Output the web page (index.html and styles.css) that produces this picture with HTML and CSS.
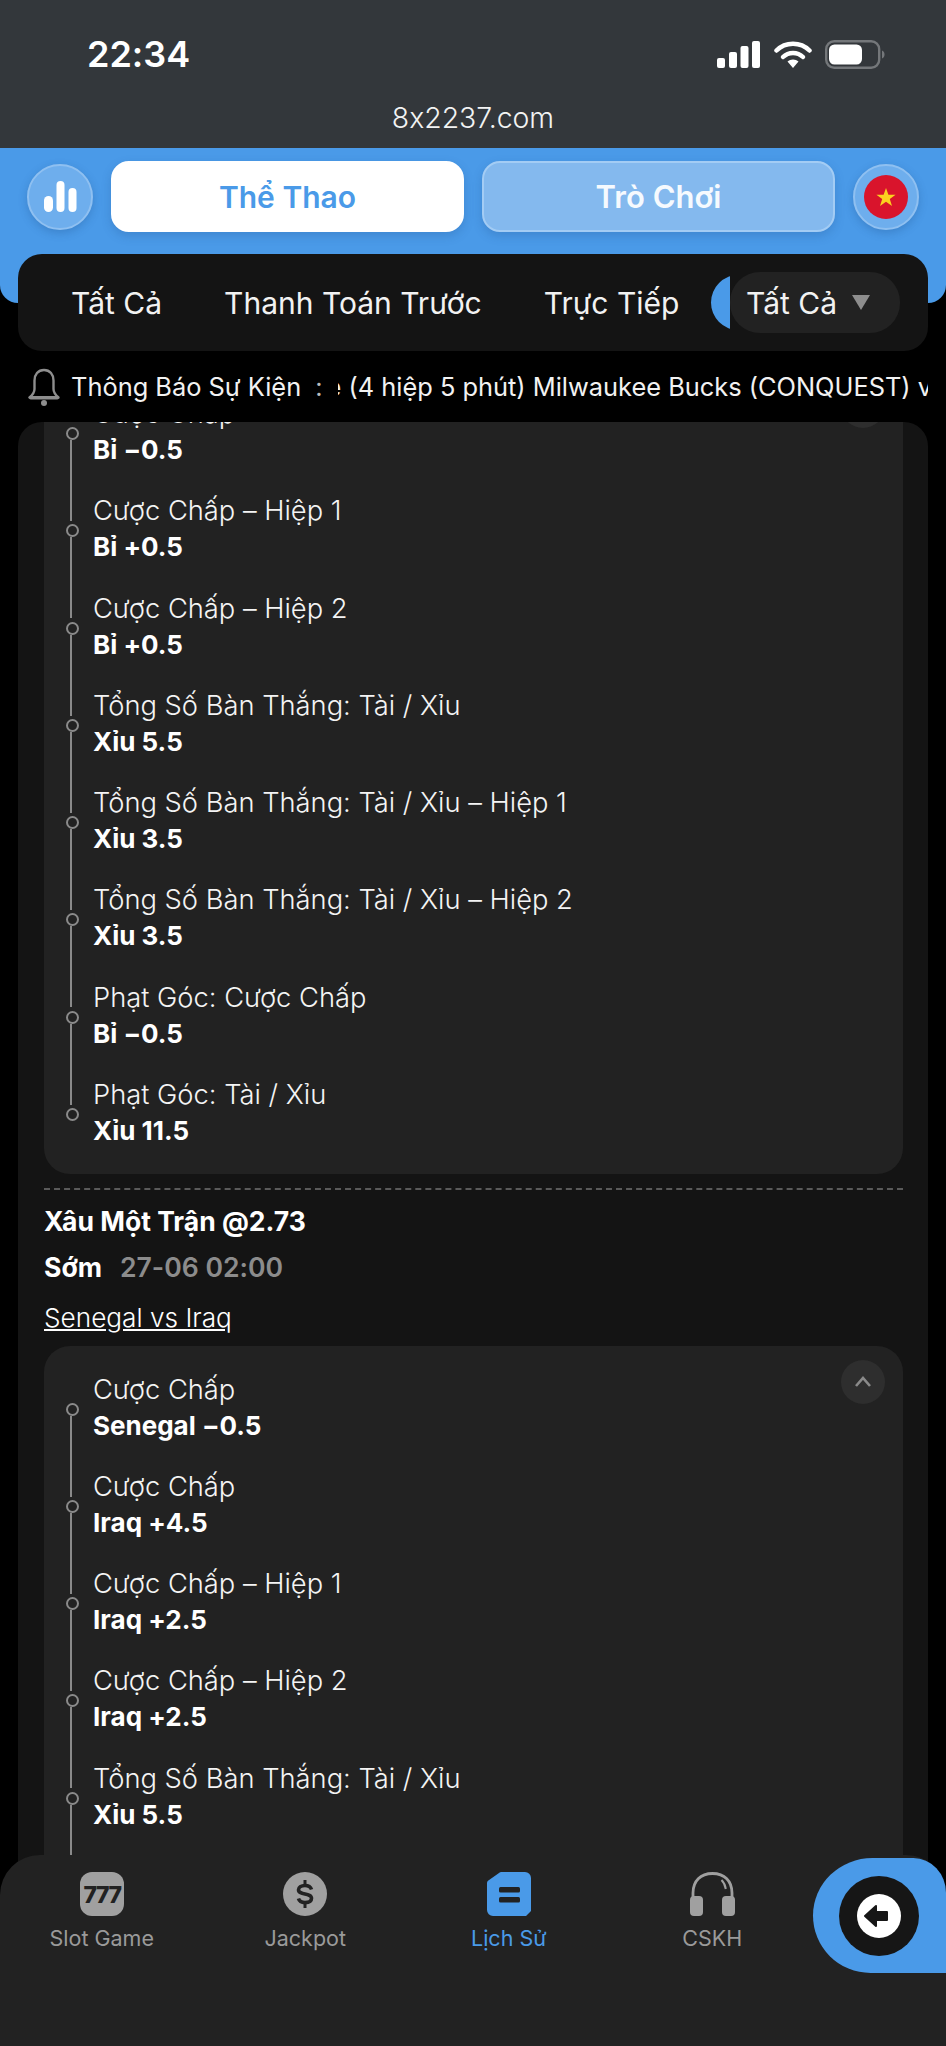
FILE: index.html
```html
<!DOCTYPE html>
<html lang="vi">
<head>
    <meta charset="UTF-8">
    <meta name="viewport" content="width=device-width, initial-scale=1.0">
    <title>8x2237.com</title>
    <link rel="stylesheet" href="styles.css">
</head>
<body>
    <div class="browser-bar">
        <div class="status-row">
            <span class="clock">22:34</span>
            <div class="status-icons">
                <svg width="43" height="27" viewBox="0 0 43 27"><rect x="0" y="17" width="8" height="10" rx="2" fill="#fff"/><rect x="12" y="11" width="8" height="16" rx="2" fill="#fff"/><rect x="23.500" y="5" width="8" height="22" rx="2" fill="#fff"/><rect x="35" y="0" width="8" height="27" rx="2" fill="#fff"/></svg>
                <svg width="38" height="28" viewBox="0 0 38 28"><path d="M2.5 10.5C11.5 1.5 26.5 1.500 35.500 10.500" fill="none" stroke="#fff" stroke-width="4.500" stroke-linecap="round"/><path d="M9 17C14.500 11.500 23.500 11.500 29 17" fill="none" stroke="#fff" stroke-width="4.500" stroke-linecap="round"/><path d="M13.500 21.500C16.500 18.800 21.500 18.800 24.500 21.500L19 28Z" fill="#fff"/></svg>
                <svg width="60" height="29" viewBox="0 0 60 29"><rect x="1.200" y="1.200" width="53" height="26.600" rx="8" fill="none" stroke="#74777a" stroke-width="2.400"/><rect x="4" y="4.500" width="33" height="20" rx="5.500" fill="#fff"/><path d="M57 10.500c2 .8 2.500 2.300 2.500 4s-.5 3.200-2.500 4z" fill="#74777a"/></svg>
            </div>
        </div>
        <div class="url">8x2237.com</div>
    </div>

    <header class="top-header">
        <div class="round-btn">
            <svg width="33" height="31" viewBox="0 0 33 31"><rect x="0" y="15" width="9" height="16" rx="4.500" fill="#fff"/><rect x="12.500" y="0" width="8" height="31" rx="4" fill="#fff"/><rect x="24.500" y="7" width="8" height="24" rx="4" fill="#fff"/></svg>
        </div>
        <div class="mode-btn mode-active">Thể Thao</div>
        <div class="mode-btn">Trò Chơi</div>
        <div class="round-btn">
            <svg width="44" height="44" viewBox="0 0 44 44"><circle cx="22" cy="22" r="22" fill="#d9142c"/><path d="M22 13l2.400 6.800h7.200l-5.800 4.300 2.200 7L22 26.800l-6 4.300 2.200-7-5.800-4.300h7.200z" fill="#fbd11f"/></svg>
        </div>
    </header>

    <nav class="tab-bar">
        <div class="tabs">
            <span class="tab">Tất Cả</span>
            <span class="tab">Thanh Toán Trước</span>
            <span class="tab">Trực Tiếp</span>
            <span class="tab-pill"></span>
        </div>
        <div class="filter">Tất Cả<span class="filter-arrow"></span></div>
    </nav>

    <div class="notice">
        <svg class="bell" width="32" height="38" viewBox="0 0 32 38"><path d="M16 2c-6 0-9.500 4.500-9.500 10.500V21c0 4-2 6-5 8.500h29c-3-2.500-5-4.500-5-8.500v-8.500C25.500 6.500 22 2 16 2z" fill="none" stroke="#8e8e8e" stroke-width="2.400" stroke-linejoin="round"/><rect x="1" y="28" width="30" height="3.500" rx="1.700" fill="#8e8e8e"/><circle cx="16" cy="35" r="3" fill="#8e8e8e"/></svg>
        <span class="notice-title">Thông Báo Sự Kiện</span>
        <span class="notice-colon">:</span>
        <div class="ticker"><span class="ticker-text">e (4 hiệp 5 phút) Milwaukee Bucks (CONQUEST) vs Dallas Mavericks</span></div>
    </div>

    <main class="history">
        <div class="history-scroll">
            <section class="legs">
                <span class="collapse"><svg width="18" height="12" viewBox="0 0 18 12"><path d="M2 10l7-8 7 8" fill="none" stroke="#8a8a8a" stroke-width="2.600"/></svg></span>
                <div class="leg"><div>Cược Chấp</div><b>Bỉ −0.5</b></div>
                <div class="leg"><div>Cược Chấp – Hiệp 1</div><b>Bỉ +0.5</b></div>
                <div class="leg"><div>Cược Chấp – Hiệp 2</div><b>Bỉ +0.5</b></div>
                <div class="leg"><div>Tổng Số Bàn Thắng: Tài / Xỉu</div><b>Xỉu 5.5</b></div>
                <div class="leg"><div>Tổng Số Bàn Thắng: Tài / Xỉu – Hiệp 1</div><b>Xỉu 3.5</b></div>
                <div class="leg"><div>Tổng Số Bàn Thắng: Tài / Xỉu – Hiệp 2</div><b>Xỉu 3.5</b></div>
                <div class="leg"><div>Phạt Góc: Cược Chấp</div><b>Bỉ −0.5</b></div>
                <div class="leg leg-last"><div>Phạt Góc: Tài / Xỉu</div><b>Xỉu 11.5</b></div>
            </section>

            <div class="divider"></div>
            <div class="bet-title">Xâu Một Trận @2.73</div>
            <div class="bet-meta"><b>Sớm</b><span>27-06 02:00</span></div>
            <a class="bet-match">Senegal vs Iraq</a>

            <section class="legs legs-open">
                <span class="collapse"><svg width="18" height="12" viewBox="0 0 18 12"><path d="M2 10l7-8 7 8" fill="none" stroke="#8a8a8a" stroke-width="2.600"/></svg></span>
                <div class="leg"><div>Cược Chấp</div><b>Senegal −0.5</b></div>
                <div class="leg"><div>Cược Chấp</div><b>Iraq +4.5</b></div>
                <div class="leg"><div>Cược Chấp – Hiệp 1</div><b>Iraq +2.5</b></div>
                <div class="leg"><div>Cược Chấp – Hiệp 2</div><b>Iraq +2.5</b></div>
                <div class="leg"><div>Tổng Số Bàn Thắng: Tài / Xỉu</div><b>Xỉu 5.5</b></div>
            </section>
        </div>
    </main>

    <footer class="bottom-nav">
        <div class="nav-item">
            <svg width="44" height="44" viewBox="0 0 44 44"><rect width="44" height="44" rx="12" fill="#a0a0a0"/><text x="22" y="31" text-anchor="middle" class="icon-777">777</text></svg>
            <span>Slot Game</span>
        </div>
        <div class="nav-item">
            <svg width="44" height="44" viewBox="0 0 44 44"><circle cx="22" cy="22" r="22" fill="#a0a0a0"/><path d="M28.500 17.500c-.8-2.500-3-4-6.500-4-4 0-6.500 1.800-6.500 4.300 0 5.700 13 2.700 13 8.500 0 2.700-2.500 4.300-6.500 4.300-3.500 0-5.800-1.500-6.500-4.100" fill="none" stroke="#222" stroke-width="3.600"/><rect x="20.500" y="8" width="3" height="5" fill="#222"/><rect x="20.500" y="31" width="3" height="5" fill="#222"/></svg>
            <span>Jackpot</span>
        </div>
        <div class="nav-item nav-active">
            <svg width="44" height="44" viewBox="0 0 44 44"><path d="M15 0h23a6 6 0 0 1 6 6v33l-5 5H6a6 6 0 0 1-6-6V11a3 3 0 0 1 1-2.200L12 1a4 4 0 0 1 3-1z" fill="#4a9ae8"/><rect x="12" y="15" width="21" height="5.500" rx="1.500" fill="#222"/><rect x="12" y="25" width="21" height="5.500" rx="1.500" fill="#222"/></svg>
            <span>Lịch Sử</span>
        </div>
        <div class="nav-item">
            <svg width="45" height="44" viewBox="0 0 45 44"><path d="M3 26V21C3 9 10.500 1.500 22.500 1.500S42 9 42 21v5" fill="none" stroke="#a0a0a0" stroke-width="2.800"/><path d="M31.500 8c2.500 2.500 3.800 5.500 4.300 9" fill="none" stroke="#a0a0a0" stroke-width="2"/><rect x="0" y="24" width="13" height="20" rx="4" fill="#a0a0a0"/><rect x="32" y="24" width="13" height="20" rx="4" fill="#a0a0a0"/></svg>
            <span>CSKH</span>
        </div>
    </footer>

    <div class="back-btn">
        <div class="back-ring">
            <svg width="44" height="44" viewBox="0 0 44 44"><circle cx="22" cy="22" r="22" fill="#fff"/><path d="M8 22L19 12v6h11v8H19v6z" fill="#161616" stroke="#161616" stroke-width="2" stroke-linejoin="round"/></svg>
        </div>
    </div>
</body>
</html>
```

FILE: styles.css
```css
* {
    box-sizing: border-box;
}
html, body {
    margin: 0;
    height: 2046px;
    overflow: hidden;
}
body {
    position: relative;
    display: flex;
    flex-direction: column;
    background-color: #000;
    color: #fff;
    font-family: Inter, "Liberation Sans", sans-serif;
    font-feature-settings: "calt" 0;
}

/* browser chrome */
.browser-bar {
    height: 148px;
    background-color: #33373b;
    flex: none;
}
.status-row {
    display: flex;
    justify-content: space-between;
    align-items: center;
    height: 108px;
    padding: 0 61px 0 87px;
}
.clock {
    font-size: 36px;
    font-weight: 600;
}
.status-icons {
    display: flex;
    align-items: center;
    gap: 13.500px;
}
.url {
    text-align: center;
    font-size: 28.400px;
    font-weight: 300;
    line-height: 20px;
    color: #f2f3f3;
}

/* blue header */
.top-header {
    display: flex;
    align-items: center;
    gap: 18px;
    height: 155px;
    padding: 13px 27px 71px 27px;
    background-color: #4a9ae8;
    border-radius: 0 0 18px 18px;
    flex: none;
}
.round-btn {
    display: flex;
    align-items: center;
    justify-content: center;
    width: 66px;
    height: 66px;
    border-radius: 50%;
    background-color: #6eaeed;
    border: 2px solid #8fc0f1;
    box-shadow: 0 3px 8px rgba(30, 80, 140, 0.3);
    flex: none;
}
.mode-btn {
    flex: 1;
    height: 71px;
    display: flex;
    align-items: center;
    justify-content: center;
    font-size: 31px;
    font-weight: 600;
    border-radius: 18px;
    background-color: #84b9ee;
    border: 2px solid #a3ccf4;
    color: #f6fafe;
    box-shadow: 0 4px 10px rgba(30, 80, 140, 0.25);
}
.mode-active {
    font-size: 30px;
    background-color: #fff;
    border-color: #fff;
    color: #4a9ae8;
}

/* tabs */
.tab-bar {
    display: flex;
    align-items: center;
    height: 97px;
    margin: -49px 18px 0;
    padding: 0 28px 0 53px;
    border-radius: 24px;
    background-color: #141414;
    flex: none;
    z-index: 1;
}
.tabs {
    display: flex;
    align-items: center;
    flex: 1;
    gap: 62px;
    overflow: hidden;
    min-width: 0;
}
.tab {
    font-size: 30px;
    white-space: nowrap;
    color: #f2f2f2;
}
.tab-pill {
    width: 120px;
    height: 55px;
    margin-left: -30px;
    border-radius: 28px;
    background-color: #4a9ae8;
    flex: none;
}
.filter {
    display: flex;
    align-items: center;
    justify-content: space-between;
    width: 170px;
    height: 61px;
    padding: 0 30px 0 16px;
    border-radius: 30px;
    background-color: #222;
    font-size: 30px;
    color: #f2f2f2;
    flex: none;
}
.filter-arrow {
    width: 0;
    height: 0;
    border-left: 9px solid transparent;
    border-right: 9px solid transparent;
    border-top: 15px solid #8d8d8d;
}

/* notice */
.notice {
    display: flex;
    align-items: center;
    height: 71px;
    padding-left: 28px;
    font-size: 25.400px;
    flex: none;
    color: #f2f2f2;
}
.bell {
    flex: none;
    margin-right: 11px;
}
.notice-title {
    white-space: nowrap;
}
.notice-colon {
    margin-left: 14px;
    color: #bbb;
}
.ticker {
    width: 590px;
    margin-left: 16px;
    overflow: hidden;
    white-space: nowrap;
}
.ticker-text {
    display: inline-block;
    margin-left: -12px;
}

/* bet list */
.history {
    flex: 1;
    margin: 0 18px;
    background-color: #141414;
    border-radius: 24px 24px 0 0;
    overflow: hidden;
}
.history-scroll {
    margin-top: -52px;
    padding: 0 25px 0 26px;
}
.legs {
    position: relative;
    display: flex;
    flex-direction: column;
    gap: 25.3px;
    padding: 26px 20px 25px 49px;
    background-color: #222;
    border-radius: 26px;
}
.legs-open {
    height: 560px;
}
.collapse {
    position: absolute;
    top: 14px;
    right: 18px;
    display: flex;
    align-items: center;
    justify-content: center;
    width: 44px;
    height: 44px;
    border-radius: 50%;
    background-color: #2e2e2e;
}
.leg {
    position: relative;
    font-size: 27.300px;
    font-weight: 300;
    line-height: 36px;
    color: #f4f4f4;
}
.leg b {
    display: block;
    font-size: 26px;
    font-weight: 700;
    color: #fff;
}
/* dot and rail of the timeline */
.leg::before {
    content: "";
    position: absolute;
    left: -27px;
    top: 31px;
    width: 9px;
    height: 9px;
    border: 2.500px solid #8a8a8a;
    border-radius: 50%;
}
.leg::after {
    content: "";
    position: absolute;
    left: -23.500px;
    top: 44px;
    width: 2px;
    height: 81px;
    background-color: #8a8a8a;
}
.leg-last::after {
    display: none;
}
.divider {
    margin-top: 14px;
    border-top: 2px dashed #5a5a5a;
}
.bet-title {
    margin-top: 13px;
    font-size: 26.500px;
    line-height: 36px;
    font-weight: 700;
}
.bet-meta {
    display: flex;
    gap: 18px;
    margin-top: 10px;
    font-size: 26.600px;
    line-height: 36px;
}
.bet-meta span {
    color: #8c8c8c;
    font-weight: 600;
}
.bet-match {
    display: block;
    margin: 15px 0 9.500px;
    font-size: 26.200px;
    font-weight: 300;
    line-height: 36px;
    text-decoration: underline;
}

/* bottom nav */
.bottom-nav {
    position: absolute;
    left: 0;
    right: 0;
    bottom: 0;
    display: flex;
    height: 191px;
    padding: 17px 132px 0 0;
    background-color: #222;
    border-radius: 40px 40px 0 0;
}
.nav-item {
    display: flex;
    flex-direction: column;
    align-items: center;
    width: 203.500px;
    gap: 6px;
    font-size: 21.500px;
    line-height: 32px;
    color: #9a9a9a;
}
.nav-active {
    color: #4a9ae8;
}
.icon-777 {
    font-size: 23px;
    font-weight: 800;
    letter-spacing: -1.500px;
    fill: #222;
}
.back-btn {
    position: absolute;
    right: 0;
    top: 1858px;
    display: flex;
    align-items: center;
    padding-left: 26px;
    width: 133px;
    height: 115px;
    background-color: #4a9ae8;
    border-radius: 60px 33px 0 58px / 58px 35px 0 58px;
}
.back-ring {
    display: flex;
    align-items: center;
    justify-content: center;
    width: 80px;
    height: 80px;
    border-radius: 50%;
    background-color: #161616;
}
```
